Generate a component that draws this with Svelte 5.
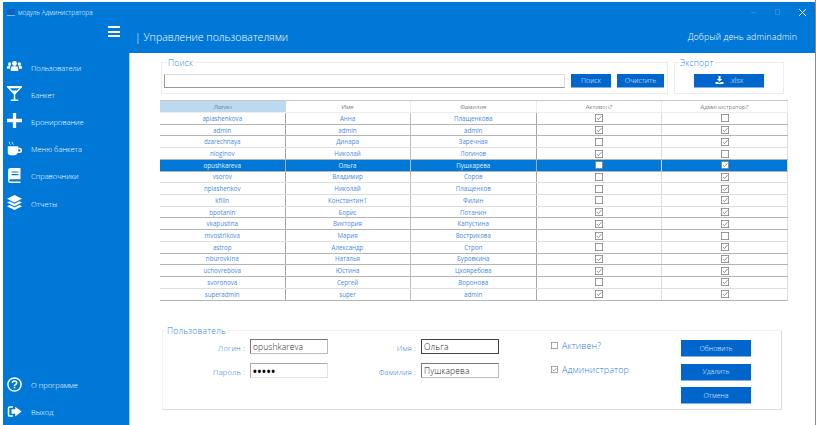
<script>
  const users = [
    ['aplashenkova', 'Анна', 'Плащенкова', true, false],
    ['admin', 'admin', 'admin', true, true],
    ['dzarechnaya', 'Динара', 'Заречная', false, true],
    ['nloginov', 'Николай', 'Логинов', true, false],
    ['opushkareva', 'Ольга', 'Пушкарева', false, true],
    ['vsorov', 'Владимир', 'Соров', false, true],
    ['nplashenkov', 'Николай', 'Плащенков', false, true],
    ['kfilin', 'Константин1', 'Филин', false, true],
    ['bpotanin', 'Борис', 'Потанин', true, true],
    ['vkapustina', 'Виктория', 'Капустина', true, true],
    ['mvostrikova', 'Мария', 'Вострикова', true, false],
    ['astrop', 'Александр', 'Строп', false, true],
    ['nburovkina', 'Наталья', 'Буровкина', true, true],
    ['uchovrebova', 'Юстина', 'Цхояребова', true, true],
    ['svoronova', 'Сергей', 'Воронова', false, true],
    ['superadmin', 'super', 'admin', true, true]
  ]

  const menu = [
    ['users', 'Пользователи'],
    ['glass', 'Банкет'],
    ['plus', 'Бронирование'],
    ['coffee', 'Меню банкета'],
    ['book', 'Справочники'],
    ['layers', 'Отчеты']
  ]
</script>

{#snippet icon(name)}
  <svg class="nav-icon" viewBox="0 0 20 20" fill="#fff">
    {#if name === 'users'}
      <circle cx="10" cy="6" r="3.2" /><circle cx="3.5" cy="6.5" r="2.2" /><circle cx="16.5" cy="6.5" r="2.2" />
      <path d="M5 16v-3.5q0-3 3-3h4q3 0 3 3V16zM0 13v-2q0-2.5 2.5-2.5H5Q3.700 10 3.700 13zM20 13v-2q0-2.5-2.5-2.5H15q1.300 1.500 1.300 4.500z" />
    {:else if name === 'glass'}
      <path d="M0 0h20v1.500L11 11v7h4v2H5v-2h4v-7L0 1.500zM4 3l2.500 3h7L16 3z" fill-rule="evenodd" />
    {:else if name === 'plus'}
      <path d="M7.800 0h4.400v7.800H20v4.400h-7.800V20H7.800v-7.800H0V7.800h7.800z" />
    {:else if name === 'coffee'}
      <path d="M1 7h14v2h1.500a3.500 3.500 0 0 1 0 7H14q-1 3-4 3H5q-4 0-4-4zM15 11v3h1.500a1.500 1.500 0 0 0 0-3z" fill-rule="evenodd" />
      <path d="M3 1 5 5H4L2 1zM7 1 9 5H8L6 1z" />
    {:else if name === 'book'}
      <path d="M4.500 0H18v15H4.500q-1.500 0-1.500 1.500T4.500 18H18v2H4Q1.500 20 1.500 17V3.500Q1.500 0 4.500 0zM6 4.500V6h9V4.500zM6 8v1.500h9V8z" fill-rule="evenodd" />
    {:else if name === 'layers'}
      <path d="M10 0 20 5 10 10 0 5zM3.500 8.200 10 11.500 16.500 8.200 20 10 10 15 0 10zM3.500 13.200 10 16.500 16.500 13.200 20 15 10 20 0 15z" />
    {:else if name === 'help'}
      <circle cx="10" cy="10" r="8.800" fill="none" stroke="#fff" stroke-width="2" />
      <path d="M7 7.800q.3-2.600 3-2.600t3 2.300q0 1.500-1.500 2.300T10 12" fill="none" stroke="#fff" stroke-width="2" />
      <rect x="9" y="13" width="2" height="2" />
    {:else if name === 'exit'}
      <path d="M8 3H3.500Q1 3 1 5.500v9Q1 17 3.500 17H8v-2H4q-1 0-1-1V6q0-1 1-1h4z" />
      <path d="M11 3.500 19.500 10 11 16.500V13H6V7h5z" />
    {/if}
  </svg>
{/snippet}

{#snippet check(on)}
  <svg class="check" viewBox="0 0 11 11">
    <rect x="0.5" y="0.5" width="10" height="10" fill="#fff" stroke="#777" />
    {#if on}
      <path d="M2.500 5.500 4.700 7.700 9 3" fill="none" stroke="#777" stroke-width="1.100" />
    {/if}
  </svg>
{/snippet}

<div class="page">
  <div class="window">
    <header class="top">
      <div class="titlebar">
        <span class="app-mark"></span>
        <span class="app-name">модуль Администратора</span>
        <div class="controls">
          <span class="ctl-min"></span>
          <span class="ctl-max"></span>
          <svg class="ctl-close" viewBox="0 0 7 7"><path d="M0 0 7 7M7 0 0 7" stroke="#fff" fill="none" /></svg>
        </div>
      </div>
      <div class="headbar">
        <div class="burger-wrap"><span class="burger"></span></div>
        <div class="page-title">| Управление пользователями</div>
        <div class="hello">Добрый день adminadmin</div>
      </div>
    </header>

    <div class="body">
      <aside class="side">
        <nav class="nav">
          {#each menu as [ic, label]}
            <div class="nav-item">
              {@render icon(ic)}
              <span>{label}</span>
            </div>
          {/each}
        </nav>
        <nav class="nav">
          <div class="nav-item">{@render icon('help')}<span>О программе</span></div>
          <div class="nav-item">{@render icon('exit')}<span>Выход</span></div>
        </nav>
      </aside>

      <main class="content">
        <div class="tools">
          <fieldset class="search">
            <legend>Поиск</legend>
            <input class="search-input" />
            <button class="btn find">Поиск</button>
            <button class="btn clear">Очистить</button>
          </fieldset>
          <fieldset class="export">
            <legend>Экспорт</legend>
            <button class="btn wide">
              <svg class="dl" viewBox="0 0 12 12" fill="#fff"><path d="M4.500 0h3v4.500H10L6 8.500 2 4.500h2.500zM0 9h3.500L6 10.500 8.500 9H12v3H0z" /></svg>
              .xlsx
            </button>
          </fieldset>
        </div>

        <div class="table">
          <div class="row head">
            <div class="cell first">Логин</div>
            <div class="cell">Имя</div>
            <div class="cell">Фамилия</div>
            <div class="cell">Активен?</div>
            <div class="cell">Администратор?</div>
          </div>
          {#each users as u, i}
            <div class="row" class:selected={i === 4}>
              <div class="cell">{u[0]}</div>
              <div class="cell">{u[1]}</div>
              <div class="cell">{u[2]}</div>
              <div class="cell">{@render check(u[3])}</div>
              <div class="cell">{@render check(u[4])}</div>
            </div>
          {/each}
        </div>

        <fieldset class="user">
          <legend>Пользователь</legend>
          <div class="fields">
            <label class="lbl" for="f-login">Логин :</label>
            <input id="f-login" class="inp" value="opushkareva" />
            <label class="lbl" for="f-name">Имя :</label>
            <input id="f-name" class="inp focus" value="Ольга" />
            <label class="lbl" for="f-pass">Пароль :</label>
            <input id="f-pass" class="inp soft" type="password" value="12345" />
            <label class="lbl" for="f-last">Фамилия :</label>
            <input id="f-last" class="inp" value="Пушкарева" />
          </div>
          <div class="flags">
            <div class="flag">{@render check(false)}<span>Активен?</span></div>
            <div class="flag">{@render check(true)}<span>Администратор</span></div>
          </div>
          <div class="actions">
            <button class="btn act">Обновить</button>
            <button class="btn act">Удалить</button>
            <button class="btn act">Отмена</button>
          </div>
        </fieldset>
      </main>
    </div>
  </div>
</div>

<style>
  :global(body) {
    margin: 0;
    background: #fff;
    overflow: hidden;
  }

  .page {
    width: 816px;
    height: 425px;
    box-sizing: border-box;
    padding: 2px 0 0 3px;
    border-right: 1px solid #8a8a8a;
  }

  .window {
    height: 423px;
    display: flex;
    flex-direction: column;
    font-family: "Open Sans", "Noto Sans", sans-serif;
    font-weight: 300;
    overflow: hidden;
  }

  .top {
    background: #0078d7;
    color: #fff;
    height: 51px;
    flex: none;
  }

  .titlebar {
    height: 20px;
    display: flex;
    align-items: center;
    font-size: 6.5px;
    padding-left: 4px;
  }

  .app-mark {
    width: 8px;
    height: 6px;
    background: #0c63bd;
    border-bottom: 1px solid #7fb6e8;
    margin-right: 3px;
  }

  .controls {
    margin-left: auto;
    display: flex;
    align-items: center;
    gap: 19px;
    padding-right: 9px;
  }

  .ctl-min {
    width: 5px;
    height: 1px;
    background: #2a8ae0;
  }

  .ctl-max {
    width: 5px;
    height: 6px;
    box-sizing: border-box;
    border: 1px solid #2a8ae0;
  }

  .ctl-close {
    width: 7px;
    height: 7px;
  }

  .headbar {
    height: 29px;
    display: flex;
    align-items: center;
  }

  .burger-wrap {
    width: 127px;
    display: flex;
    justify-content: flex-end;
    padding-right: 10px;
    box-sizing: border-box;
    margin-top: -10px;
  }

  .burger {
    width: 12px;
    height: 11px;
    border-top: 2px solid #fff;
    border-bottom: 2px solid #fff;
    box-sizing: border-box;
    position: relative;
  }

  .burger::after {
    content: "";
    position: absolute;
    left: 0;
    right: 0;
    top: 2.5px;
    height: 2px;
    background: #fff;
  }

  .page-title {
    font-size: 10.5px;
    margin-left: 5px;
  }

  .hello {
    margin-left: auto;
    font-size: 8.8px;
    margin-right: 18px;
    letter-spacing: 0.1px;
  }

  .body {
    flex: 1;
    display: flex;
    min-height: 0;
  }

  .side {
    width: 127px;
    box-sizing: border-box;
    flex: none;
    background: #0078d7;
    color: #fff;
    border-right: 1px solid #a9d3f3;
    display: flex;
    flex-direction: column;
    justify-content: space-between;
    font-size: 7.5px;
  }

  .nav-item {
    height: 27.2px;
    display: flex;
    align-items: center;
    padding-left: 4px;
    gap: 9px;
  }

  .nav-item span {
    padding-top: 2px;
  }

  .nav-icon {
    width: 15px;
    height: 15px;
    flex: none;
  }

  .content {
    flex: 1;
    min-width: 0;
    padding: 5px 27px 0 30px;
    box-sizing: border-box;
    background: #fff;
  }

  .tools {
    display: flex;
    gap: 6px;
    height: 36px;
    padding-left: 1px;
  }

  fieldset {
    margin: 0;
    border: 1px solid #ececec;
    box-sizing: border-box;
    min-width: 0;
  }

  legend {
    font-size: 8.5px;
    color: #2f86e0;
    padding: 0 1px;
    line-height: 9px;
    letter-spacing: 0.2px;
  }

  .search {
    width: 507px;
    display: flex;
    align-items: flex-start;
    padding: 7px 0 0 1px;
    gap: 6px;
  }

  .search legend {
    margin-left: 4px;
  }

  .search-input {
    width: 401px;
    height: 14px;
    box-sizing: border-box;
    margin: 0 0 0 1px;
    border: 1px solid #ddd;
    border-left-color: #999;
    border-bottom: 1px solid #999;
    padding: 0;
  }

  .export {
    width: 110px;
    display: flex;
    align-items: flex-start;
    padding: 7px 0 0 19px;
  }

  .export legend {
    margin-left: -15px;
  }

  .btn {
    background: #0066cc;
    color: #e6f1ff;
    border: 0;
    border-bottom: 1px solid #7fb2e6;
    font-family: inherit;
    font-weight: 300;
    font-size: 7px;
    padding: 0;
  }

  .find {
    width: 40px;
    height: 14px;
  }

  .clear {
    width: 47px;
    height: 14px;
  }

  .wide {
    width: 70px;
    height: 14px;
  }

  .dl {
    width: 9px;
    height: 8px;
    margin-right: 4px;
    vertical-align: -1px;
  }

  .table {
    width: 628px;
    margin-top: 6px;
    border-top: 1px solid #c8c8c8;
    font-size: 6.2px;
    font-weight: 400;
    color: #4a8bdc;
  }

  .row {
    display: grid;
    grid-template-columns: 125.5px 125px 126.5px 125px 126px;
    height: 10.73px;
    border-bottom: 1px solid #b4b4b4;
  }

  .row:nth-child(4),
  .row:nth-child(7),
  .row:nth-child(8),
  .row:nth-child(9),
  .row:nth-child(12),
  .row:nth-child(16) {
    border-bottom-color: #dedede;
  }

  .head {
    color: #333;
    font-weight: 300;
    height: 11px;
    border-bottom: 1px solid #eee;
  }

  .cell {
    display: flex;
    align-items: center;
    justify-content: center;
    border-right: 1px solid #a8a8a8;
    overflow: hidden;
    white-space: nowrap;
  }

  .cell:nth-child(2) {
    border-right-color: #bdbdbd;
  }

  .cell:nth-child(4),
  .cell:nth-child(5) {
    border-right-color: #dcdcdc;
  }

  .head .cell {
    border-right: 1px solid #eee;
  }

  .head .first {
    background: #bbdaf2;
    border-right: 0;
  }

  .selected {
    background: #0078d7;
    color: #e4f0ff;
  }

  .check {
    width: 8px;
    height: 8px;
    flex: none;
  }

  .user {
    margin: 25px 0 0 2px;
    width: 620px;
    height: 84px;
    border: 1px solid #f2f2f2;
    border-bottom: 1px solid #ddd;
    border-right: 1px solid #ddd;
    padding: 0;
    display: flex;
  }

  .user legend {
    margin-left: 3px;
    font-size: 8.5px;
  }

  .fields {
    display: grid;
    grid-template-columns: 85px 78px 89px 78px;
    grid-auto-rows: 24px;
    align-items: center;
    column-gap: 2px;
    height: fit-content;
  }

  .lbl {
    text-align: right;
    font-size: 7.5px;
    color: #2a78d4;
    letter-spacing: 0.2px;
    margin-right: 3px;
    padding-top: 2px;
  }

  .inp {
    width: 78px;
    height: 15px;
    box-sizing: border-box;
    padding: 0 0 0 2px;
    border: 1px solid #bbb;
    border-top-color: #777;
    border-left-color: #777;
    font-family: inherit;
    font-weight: 300;
    font-size: 8.5px;
    color: #222;
    letter-spacing: 0.1px;
  }

  .soft {
    border-color: #aaa #e2e2e2 #e2e2e2 #aaa;
    color: #000;
    font-weight: 700;
    font-size: 10px;
    letter-spacing: 0.8px;
  }

  .focus {
    border: 1px solid #444;
  }

  .flags {
    margin-left: 52px;
    display: flex;
    flex-direction: column;
    gap: 12.5px;
    padding-top: 5.5px;
  }

  .flag {
    display: flex;
    align-items: center;
    gap: 4px;
    font-size: 9px;
    height: 11px;
    color: #2f7ad6;
    letter-spacing: 0.1px;
  }

  .flag .check {
    width: 7px;
    height: 7px;
  }

  .actions {
    margin-left: auto;
    margin-right: 30px;
    display: flex;
    flex-direction: column;
    gap: 6.5px;
    padding-top: 5.8px;
  }

  .act {
    width: 70px;
    height: 17px;
  }
</style>
